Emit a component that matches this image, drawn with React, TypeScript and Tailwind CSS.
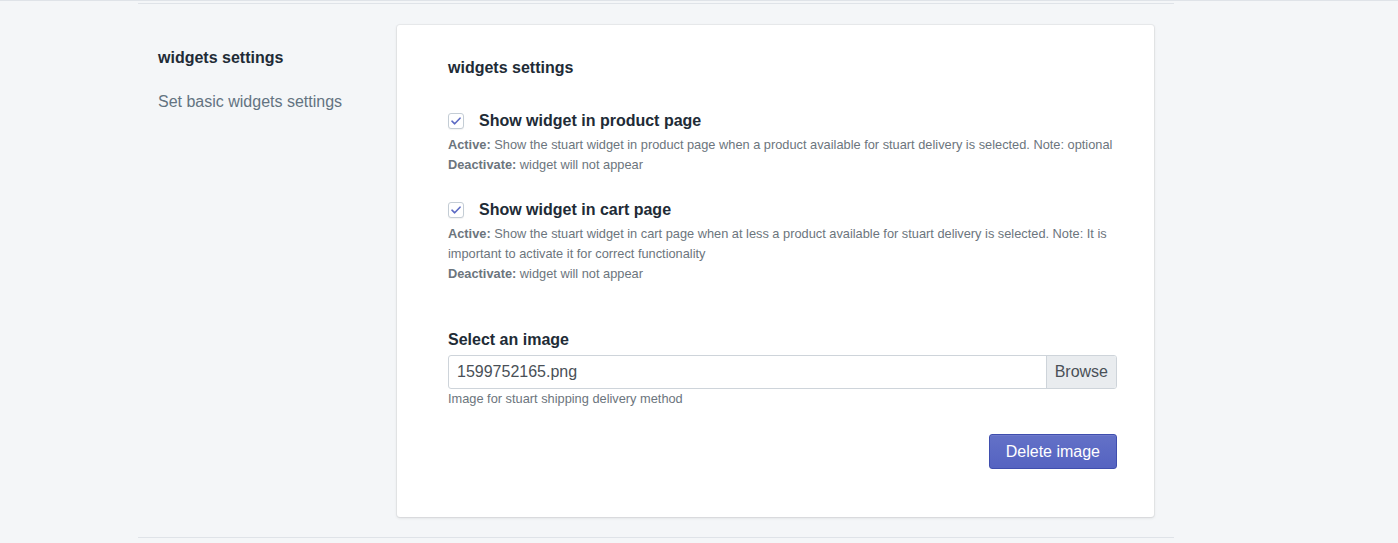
import React from "react";

const HelpText = ({ active, children }: { active: string; children?: React.ReactNode }) => (
  <div className="mt-[2px] text-[12.8px] leading-5 text-[#6c757d]">
    <div>
      <span className="font-bold">Active:</span> {active}
    </div>
    {children}
    <div>
      <span className="font-bold">Deactivate:</span> widget will not appear
    </div>
  </div>
);

const CheckRow = ({ label }: { label: string }) => (
  <label className="flex items-center gap-[15px] text-base leading-6 font-bold text-[#212b36]">
    <span className="flex h-4 w-4 items-center justify-center rounded-[3px] border border-[#c4cdd5] bg-white shadow-[0_1px_1px_rgba(0,0,0,0.05)]">
      <svg width="10" height="8" viewBox="0 0 10 8" fill="none">
        <path d="M1 4.2 3.7 6.8 9 1.2" stroke="#5c6ac4" strokeWidth="1.6" strokeLinecap="round" strokeLinejoin="round" />
      </svg>
    </span>
    {label}
  </label>
);

export default function App() {
  return (
    <div
      className="min-h-screen bg-[#f4f6f8] border-t border-[#dfe3e8]"
      style={{ fontFamily: '"Liberation Sans", Arial, sans-serif' }}
    >
      <div className="ml-[138px] w-[1036px] mt-[2px] border-t border-[#dfe3e8] pt-[21px] pb-5 border-b">
        <div className="flex">
          <div className="w-[259px] shrink-0 pl-5 pt-[21px]">
            <div className="text-base leading-6 font-bold text-[#212b36]">widgets settings</div>
            <div className="mt-5 text-base leading-6 text-[#637381]">Set basic widgets settings</div>
          </div>

          <div className="w-[757px] rounded-[3px] bg-white pl-[51px] pr-[37px] pt-[31px] pb-[48px] shadow-[0_0_0_1px_rgba(63,63,68,0.05),0_1px_3px_0_rgba(63,63,68,0.15)]">
            <div className="text-base leading-6 font-bold text-[#212b36]">widgets settings</div>

            <div className="mt-[29px]">
              <CheckRow label="Show widget in product page" />
              <HelpText active="Show the stuart widget in product page when a product available for stuart delivery is selected. Note: optional" />
            </div>

            <div className="mt-[23px]">
              <CheckRow label="Show widget in cart page" />
              <HelpText active="Show the stuart widget in cart page when at less a product available for stuart delivery is selected. Note: It is important to activate it for correct functionality" />
            </div>

            <div className="mt-[44px] text-base leading-6 font-bold text-[#212b36]">Select an image</div>
            <div className="mt-[3px] flex h-[34px] overflow-hidden rounded-[3px] border border-[#ced4da] bg-white">
              <div className="flex flex-1 items-center px-2 text-base text-[#495057]">1599752165.png</div>
              <div className="flex items-center border-l border-[#ced4da] bg-[#e9ecef] px-2 text-base text-[#495057]">Browse</div>
            </div>
            <div className="text-[12.8px] leading-5 text-[#6c757d]">Image for stuart shipping delivery method</div>

            <div className="mt-[25px] flex justify-end">
              <button className="h-[35px] rounded-[3px] border border-[#3f4eae] bg-gradient-to-b from-[#6371c7] to-[#5563c1] px-4 text-base text-white shadow-[inset_0_1px_0_0_#6f7bcb]">
                Delete image
              </button>
            </div>
          </div>
        </div>
      </div>
    </div>
  );
}
